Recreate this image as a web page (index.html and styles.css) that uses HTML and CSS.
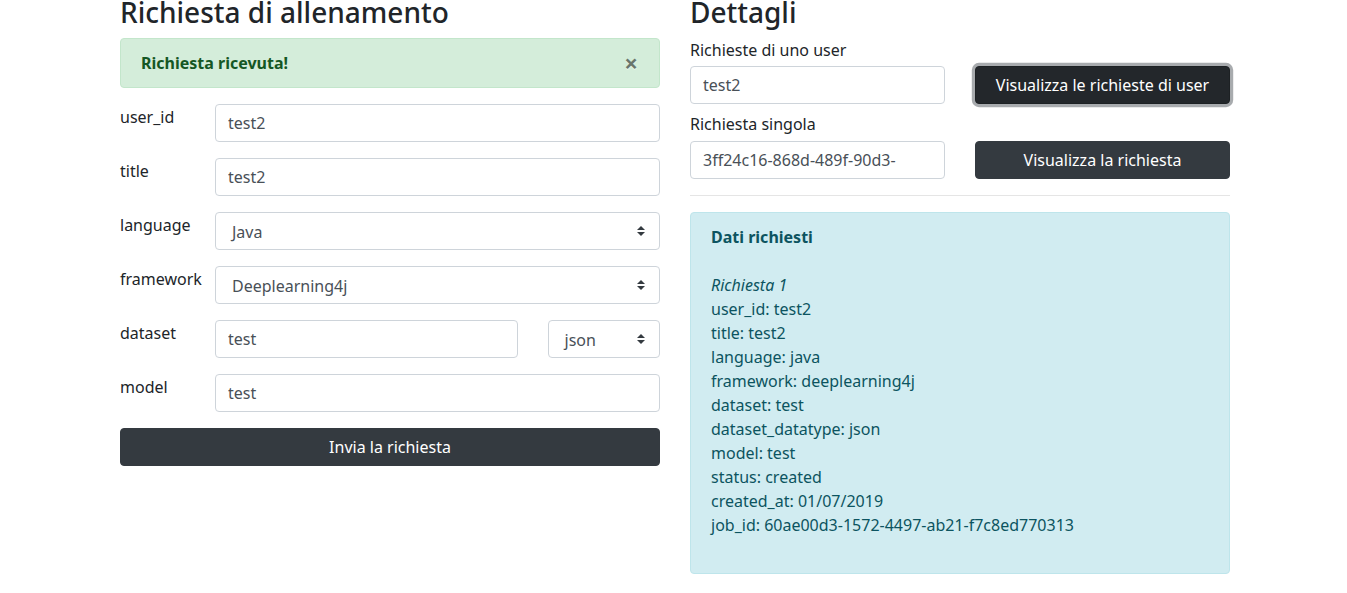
FILE: index.html
```html
<!DOCTYPE html>
<html lang="it">
<head>
<meta charset="utf-8">
<title>Richiesta di allenamento</title>
<link rel="stylesheet" href="styles.css">
</head>
<body>
<div class="container">
  <div class="col">
    <h3 class="title">Richiesta di allenamento</h3>
    <div class="alert alert-success">
      <strong>Richiesta ricevuta!</strong>
      <span class="close">&times;</span>
    </div>
    <div class="form-row">
      <label class="lbl">user_id</label>
      <input class="input" type="text" value="test2">
    </div>
    <div class="form-row">
      <label class="lbl">title</label>
      <input class="input" type="text" value="test2">
    </div>
    <div class="form-row">
      <label class="lbl">language</label>
      <div class="select"><span>Java</span><svg class="arrows" viewBox="0 0 4 5" width="8" height="10"><path d="M2 0L0 2h4zm0 5L0 3h4z" fill="#343a40"/></svg></div>
    </div>
    <div class="form-row">
      <label class="lbl">framework</label>
      <div class="select"><span>Deeplearning4j</span><svg class="arrows" viewBox="0 0 4 5" width="8" height="10"><path d="M2 0L0 2h4zm0 5L0 3h4z" fill="#343a40"/></svg></div>
    </div>
    <div class="form-row">
      <label class="lbl">dataset</label>
      <input class="input input-ds" type="text" value="test">
      <div class="select select-sm"><span>json</span><svg class="arrows" viewBox="0 0 4 5" width="8" height="10"><path d="M2 0L0 2h4zm0 5L0 3h4z" fill="#343a40"/></svg></div>
    </div>
    <div class="form-row">
      <label class="lbl">model</label>
      <input class="input" type="text" value="test">
    </div>
    <button class="btn btn-block">Invia la richiesta</button>
  </div>

  <div class="col">
    <h3 class="title">Dettagli</h3>
    <label class="top-lbl">Richieste di uno user</label>
    <div class="pair pair-first">
      <input class="input" type="text" value="test2">
      <button class="btn btn-focus">Visualizza le richieste di user</button>
    </div>
    <label class="top-lbl lbl2">Richiesta singola</label>
    <div class="pair">
      <input class="input" type="text" value="3ff24c16-868d-489f-90d3-">
      <button class="btn">Visualizza la richiesta</button>
    </div>
    <hr class="sep">
    <div class="alert alert-info">
      <strong>Dati richiesti</strong>
      <div class="blank"></div>
      <em>Richiesta 1</em>
      <div>user_id: test2</div>
      <div>title: test2</div>
      <div>language: java</div>
      <div>framework: deeplearning4j</div>
      <div>dataset: test</div>
      <div>dataset_datatype: json</div>
      <div>model: test</div>
      <div>status: created</div>
      <div>created_at: 01/07/2019</div>
      <div>job_id: 60ae00d3-1572-4497-ab21-f7c8ed770313</div>
      <div class="blank"></div>
    </div>
  </div>
</div>
</body>
</html>
```

FILE: styles.css
```css
* { box-sizing: border-box; }
html, body { margin: 0; padding: 0; background: #fff; }
body {
  font-family: "Noto Sans", "Open Sans", sans-serif;
  font-size: 16px;
  line-height: 1.5;
  color: #212529;
}
.container {
  width: 1110px;
  margin: -3.6px 0 0 120px;
  display: flex;
  gap: 30px;
}
.col { width: 540px; display: flex; flex-direction: column; }
.title {
  font-size: 28px;
  font-weight: 500;
  line-height: 1.2;
  margin: 0 0 8px;
}
.alert {
  border: 1px solid transparent;
  border-radius: 4px;
  padding: 12px 20px;
  margin-bottom: 16px;
  position: relative;
}
.alert-success { background: #d4edda; border-color: #c3e6cb; color: #155724; }
.alert-info { background: #d1ecf1; border-color: #bee5eb; color: #0c5460; display: flex; flex-direction: column; }
.alert-info strong, .alert-info em { display: block; }
.blank { height: 24px; }
.close {
  position: absolute;
  top: 0; right: 0;
  padding: 12px 21px;
  font-size: 24px;
  font-weight: 700;
  line-height: 1;
  color: #000;
  opacity: .5;
  text-shadow: 0 1px 0 #fff;
}
.form-row { display: flex; align-items: flex-start; margin-bottom: 16px; }
.lbl { width: 95px; flex: none; white-space: nowrap; padding-top: 1px; }
.input {
  display: block;
  height: 38px;
  padding: 6px 12px;
  font: inherit;
  color: #495057;
  background: #fff;
  border: 1px solid #ced4da;
  border-radius: 4px;
  flex: 1;
  min-width: 0;
  outline: none;
}
.input-ds { flex: none; width: 302.5px; }
.select {
  flex: 1;
  height: 38px;
  display: flex;
  align-items: center;
  justify-content: space-between;
  padding: 7px 14px 5px 16px;
  color: #495057;
  background: #fff;
  border: 1px solid #ced4da;
  border-radius: 4px;
}
.select-sm { flex: none; width: 112.5px; margin-left: 30px; }
.arrows { flex: none; margin-top: -2px; }
.btn {
  display: block;
  height: 38px;
  padding: 6px 12px;
  font: inherit;
  color: #fff;
  background: #343a40;
  border: 1px solid #343a40;
  border-radius: 4px;
  text-align: center;
}
.btn-block { width: 100%; }
.btn-focus {
  background: #23272b;
  border-color: #1d2124;
  box-shadow: 0 0 0 3.2px rgba(82, 88, 93, .5);
}
.top-lbl { display: block; margin-bottom: 4px; }
.lbl2 { margin-bottom: 5px; }
.pair { display: flex; gap: 30px; }
.pair > * { width: 255px; flex: none; }
.pair-first { margin-bottom: 8px; }
.sep {
  border: 0;
  border-top: 1px solid rgba(0, 0, 0, .1);
  margin: 16px 0;
  width: 100%;
}
```
